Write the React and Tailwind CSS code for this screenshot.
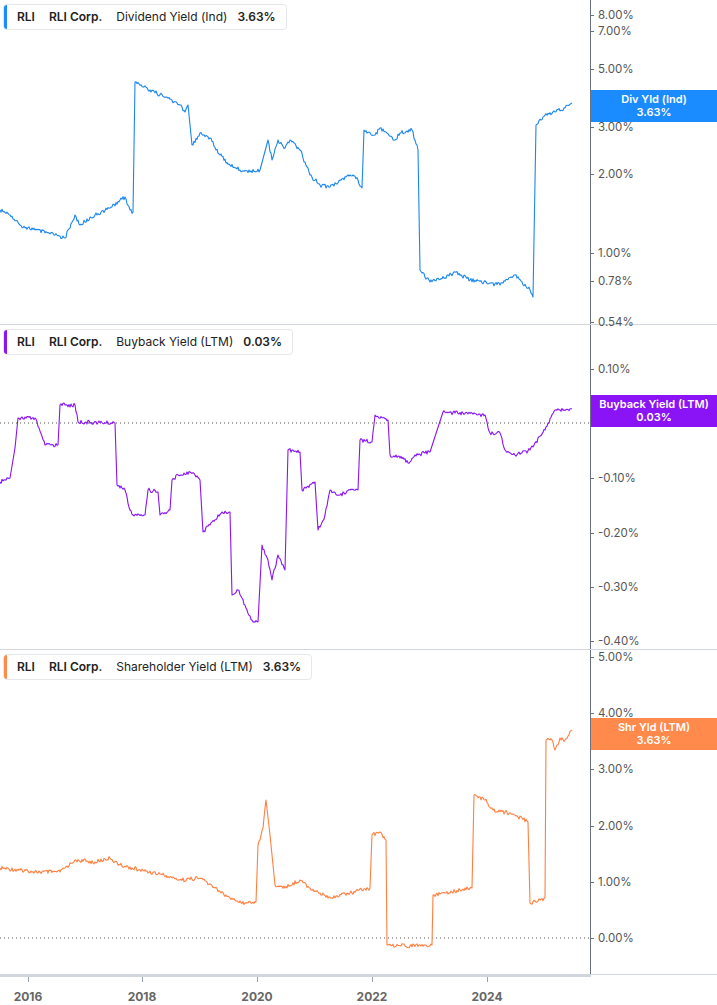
import React from 'react';

const font = { fontFamily: 'Inter, "Liberation Sans", sans-serif' };

const panels = [
  {
    top: 0,
    color: '#1a86f0',
    metric: 'Dividend Yield (Ind)',
    value: '3.63%',
    badge: ['Div Yld (Ind)', '3.63%'],
    badgeTop: 90,
    badgeBg: 'bg-[#1a8cff]',
    bar: 'bg-[#1a8cff]',
    ticks: [['8.00%', 15], ['7.00%', 31], ['5.00%', 69], ['3.00%', 127], ['2.00%', 174], ['1.00%', 253], ['0.78%', 281], ['0.54%', 322]],
    pts: [[0,210],[10,215],[20,225],[35,230],[55,235],[65,238],[75,215],[80,225],[95,215],[110,208],[120,200],[125,197],[130,210],[133,212],[135,82],[150,90],[165,97],[180,105],[185,112],[188,105],[192,145],[200,133],[210,138],[220,155],[230,165],[240,170],[250,172],[260,170],[268,140],[272,160],[278,140],[285,148],[290,140],[300,150],[310,175],[320,185],[330,187],[340,180],[350,175],[358,180],[362,188],[364,130],[375,135],[380,128],[395,140],[400,133],[412,130],[418,150],[420,270],[430,282],[445,278],[455,272],[470,280],[490,283],[500,285],[515,275],[530,290],[533,297],[536,125],[545,115],[555,112],[565,108],[572,103]],
  },
  {
    top: 325,
    color: '#8a14f5',
    metric: 'Buyback Yield (LTM)',
    value: '0.03%',
    badge: ['Buyback Yield (LTM)', '0.03%'],
    badgeTop: 395,
    badgeBg: 'bg-[#8a14f5]',
    bar: 'bg-[#8a14f5]',
    zero: 423,
    ticks: [['0.10%', 369], ['0.00%', 423], ['-0.10%', 478], ['-0.20%', 533], ['-0.30%', 587], ['-0.40%', 641]],
    pts: [[0,482],[10,478],[15,448],[18,418],[35,418],[45,445],[58,445],[60,405],[75,405],[78,422],[115,423],[117,485],[125,490],[130,510],[133,515],[145,515],[148,490],[158,492],[160,515],[170,510],[172,480],[178,475],[190,472],[195,475],[200,480],[203,532],[210,525],[222,512],[230,512],[232,595],[238,590],[242,598],[247,610],[252,620],[258,622],[262,545],[268,560],[272,580],[278,555],[285,570],[288,450],[300,452],[302,490],[315,482],[318,530],[325,515],[330,490],[340,495],[350,490],[358,490],[360,440],[372,442],[375,415],[388,420],[390,455],[400,458],[410,462],[415,455],[430,452],[443,412],[485,415],[490,433],[500,433],[505,450],[515,455],[530,450],[545,430],[555,410],[572,409]],
  },
  {
    top: 650,
    color: '#ff7f3f',
    metric: 'Shareholder Yield (LTM)',
    value: '3.63%',
    badge: ['Shr Yld (LTM)', '3.63%'],
    badgeTop: 718,
    badgeBg: 'bg-[#ff8a4c]',
    bar: 'bg-[#ff8a4c]',
    zero: 938,
    ticks: [['5.00%', 657], ['4.00%', 713], ['3.00%', 769], ['2.00%', 826], ['1.00%', 882], ['0.00%', 938]],
    pts: [[0,868],[20,870],[40,872],[60,872],[75,860],[95,862],[110,858],[120,865],[140,870],[160,874],[180,880],[200,878],[215,888],[230,898],[245,903],[256,902],[258,845],[263,828],[266,800],[270,835],[275,885],[285,888],[300,880],[310,888],[320,893],[330,897],[350,893],[370,888],[372,835],[380,832],[386,840],[387,945],[405,946],[425,945],[432,945],[433,895],[445,893],[460,890],[472,888],[474,795],[485,800],[495,812],[505,812],[515,815],[528,822],[530,903],[540,900],[545,898],[546,740],[552,740],[555,750],[560,738],[565,740],[572,730]],
  },
];

// deterministic noise so the lines look like daily data
function noise(n) {
  const s = Math.sin(n * 12.9898) * 43758.5453;
  return s - Math.floor(s) - 0.5;
}

function jitter(pts) {
  const out = [];
  for (let i = 0; i < pts.length - 1; i++) {
    const [x1, y1] = pts[i];
    const [x2, y2] = pts[i + 1];
    out.push([x1, y1]);
    if (x2 - x1 > 2 && Math.abs(y2 - y1) < 30) {
      for (let x = x1 + 1; x < x2; x += 1) {
        const t = (x - x1) / (x2 - x1);
        out.push([x, y1 + (y2 - y1) * t + noise(x + i * 7) * 4]);
      }
    }
  }
  out.push(pts[pts.length - 1]);
  return out.map(([x, y]) => `${x},${y.toFixed(1)}`).join(' ');
}

function Panel({ p }) {
  return (
    <div className="flex h-[325px] border-b border-gray-300">
      <div className="relative w-[591px] border-r border-gray-500">
        <svg className="absolute inset-0" width="590" height="325" viewBox={`0 ${p.top} 590 325`}>
          {p.zero && (
            <line x1="0" x2="590" y1={p.zero} y2={p.zero} stroke="#555" strokeWidth="1" strokeDasharray="1 3" />
          )}
          <polyline points={jitter(p.pts)} fill="none" stroke={p.color} strokeWidth="1.1" strokeLinejoin="round" />
        </svg>
        <div className="absolute left-[3px] top-[4px] h-[26px] pr-[10px] flex items-center gap-[14px] whitespace-nowrap bg-white border border-gray-200 rounded text-[12px] text-[#222] overflow-hidden">
          <div className={`w-[3px] self-stretch ${p.bar}`} />
          <span className="font-semibold -ml-[4px]">RLI</span>
          <span className="font-semibold">RLI Corp.</span>
          <span>{p.metric}</span>
          <span className="font-semibold -ml-[4px]">{p.value}</span>
        </div>
      </div>
      <div className="relative flex-1 text-[11.5px] text-[#555]">
        {p.ticks.map(([t, y]) => (
          <div key={t} className="absolute left-0 flex items-center gap-[4px]" style={{ top: y - p.top - 8 }}>
            <span className="w-[3px] h-px bg-gray-500" />
            <span>{t}</span>
          </div>
        ))}
        <div
          className={`absolute left-0 right-0 h-[32px] ${p.badgeBg} text-white text-[11px] font-semibold leading-[13px] flex flex-col items-center justify-center`}
          style={{ top: p.badgeTop - p.top }}
        >
          <span>{p.badge[0]}</span>
          <span>{p.badge[1]}</span>
        </div>
      </div>
    </div>
  );
}

export default function App() {
  const years = [['2016', 28], ['2018', 142], ['2020', 257], ['2022', 372], ['2024', 487]];
  return (
    <div className="w-[717px] h-[1005px] bg-white overflow-hidden" style={font}>
      {panels.map((p) => <Panel key={p.top} p={p} />)}
      <div className="relative h-[30px] w-[591px] border-t-2 border-gray-300">
        {years.map(([y, x]) => (
          <div key={y} className="absolute top-0 flex flex-col items-center" style={{ left: x - 20, width: 40 }}>
            <span className="w-px h-[5px] bg-gray-400" />
            <span className="mt-[6px] text-[12px] font-bold text-[#666]">{y}</span>
          </div>
        ))}
      </div>
    </div>
  );
}
